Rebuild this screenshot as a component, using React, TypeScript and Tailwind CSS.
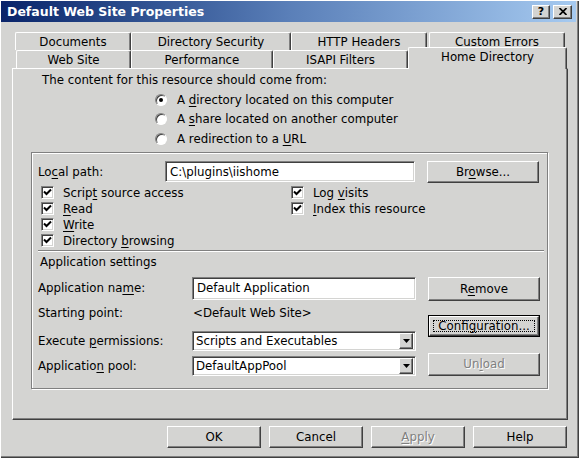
import { ReactNode } from "react";

const RAISED =
  "bg-[#d4d4d2] border border-t-white border-l-white border-r-[#404040] border-b-[#404040] shadow-[inset_-1px_-1px_0_#808080]";
const SUNKEN =
  "bg-white border border-t-[#808080] border-l-[#808080] border-r-white border-b-white shadow-[inset_1px_1px_0_#404040,inset_-1px_-1px_0_#d4d4d2]";

// Mnemonic underline
function U({ children }: { children: ReactNode }) {
  return <span className="underline underline-offset-[2px]">{children}</span>;
}

function Button({
  children,
  className = "",
  disabled,
  isDefault,
}: {
  children: ReactNode;
  className?: string;
  disabled?: boolean;
  isDefault?: boolean;
}) {
  const label = disabled ? (
    <span className="text-[#808080] [text-shadow:1px_1px_0_#fff]">{children}</span>
  ) : (
    <span>{children}</span>
  );
  if (isDefault) {
    return (
      <div className={`border border-black ${className}`}>
        <div className={`h-full w-full flex items-center justify-center p-[3px] ${RAISED}`}>
          <div className="h-full w-full flex items-center justify-center border border-dotted border-black">
            {label}
          </div>
        </div>
      </div>
    );
  }
  return (
    <div className={`flex items-center justify-center ${RAISED} ${className}`}>{label}</div>
  );
}

function Checkbox({ children }: { children: ReactNode }) {
  return (
    <div className="flex items-center h-[16px]">
      <div className={`w-[13px] h-[13px] flex items-center justify-center ${SUNKEN}`}>
        <svg width="9" height="9" viewBox="0 0 9 9">
          <path d="M1 3.5 L3.5 6 L8 1.5" stroke="#000" strokeWidth="2" fill="none" />
        </svg>
      </div>
      <span className="ml-[9px]">{children}</span>
    </div>
  );
}

function Radio({ children, checked }: { children: ReactNode; checked?: boolean }) {
  return (
    <div className="flex items-center h-[19.5px]">
      <div className="w-[12px] h-[12px] rounded-full bg-white flex items-center justify-center border border-t-[#808080] border-l-[#808080] border-r-white border-b-white shadow-[inset_1px_1px_0_#404040]">
        {checked && <div className="w-[4px] h-[4px] rounded-full bg-black" />}
      </div>
      <span className="ml-[10px]">{children}</span>
    </div>
  );
}

function Select({ value }: { value: string }) {
  return (
    <div className={`w-[224px] h-[20px] flex items-center pl-[3px] pr-[2px] ${SUNKEN}`}>
      <span className="flex-1">{value}</span>
      <div className={`w-[14px] h-[16px] flex items-center justify-center ${RAISED}`}>
        <svg width="7" height="4" viewBox="0 0 7 4">
          <polygon points="0,0 7,0 3.5,4" fill="#000" />
        </svg>
      </div>
    </div>
  );
}

function Tab({ label, className = "" }: { label: string; className?: string }) {
  return (
    <div
      className={`h-[18px] flex items-center justify-center bg-[#d4d4d2] border-t border-l border-r border-t-white border-l-white border-r-[#404040] rounded-t-[2px] shadow-[inset_-1px_0_0_#808080] ${className}`}
    >
      {label}
    </div>
  );
}

export default function App() {
  return (
    <div className="w-[579px] h-[458px] overflow-hidden flex flex-col bg-[#d4d4d2] text-black text-[11.8px] leading-[14px] font-['DejaVu_Sans',sans-serif] shadow-[inset_1px_1px_0_#fff,inset_-1px_-1px_0_#404040,inset_-2px_-2px_0_#808080]">
      {/* Title bar */}
      <div className="mx-[1px] mt-[1px] mr-[3px] h-[21px] flex items-center pl-[6px] pr-[4px] bg-linear-to-r from-[#0a246a] via-[#5a7fb8] to-[#a6caf0]">
        <span className="flex-1 text-white font-bold text-[12.5px]">Default Web Site Properties</span>
        <div className={`w-[18px] h-[14px] flex items-center justify-center font-bold text-[11px] ${RAISED}`}>
          ?
        </div>
        <div className={`ml-[3px] w-[19px] h-[14px] flex items-center justify-center ${RAISED}`}>
          <svg width="8" height="7" viewBox="0 0 8 7">
            <path d="M0.5 0 L7.5 7 M7.5 0 L0.5 7" stroke="#000" strokeWidth="1.7" />
          </svg>
        </div>
      </div>

      {/* Tabs, back row */}
      <div className="mt-[10px] ml-[15px] flex">
        <Tab label="Documents" className="w-[116px]" />
        <Tab label="Directory Security" className="w-[160px]" />
        <Tab label="HTTP Headers" className="w-[136px]" />
        <Tab label="Custom Errors" className="ml-[2px] w-[136px]" />
      </div>
      {/* Tabs, front row */}
      <div className="ml-[16px] h-[18px] flex items-end">
        <Tab label="Web Site" className="w-[115px]" />
        <Tab label="Performance" className="w-[142px]" />
        <Tab label="ISAPI Filters" className="w-[135px]" />
        <div className="relative z-10 -mb-[1px] w-[159px] h-[22px] pb-[4px] flex items-center justify-center bg-[#d4d4d2] border-t border-l border-r border-t-white border-l-white border-r-[#404040] rounded-t-[2px] shadow-[inset_-1px_0_0_#808080]">
          Home Directory
        </div>
      </div>

      {/* Panel */}
      <div className={`ml-[12px] w-[556px] h-[352px] flex flex-col ${RAISED}`}>
        <div className="mt-[4px] ml-[29px]">The content for this resource should come from:</div>
        <div className="mt-[3px] ml-[142px] flex flex-col">
          <Radio checked>
            A <U>d</U>irectory located on this computer
          </Radio>
          <Radio>
            A <U>s</U>hare located on another computer
          </Radio>
          <Radio>
            A redirection to a <U>U</U>RL
          </Radio>
        </div>

        {/* Group box */}
        <div className="mt-[3px] ml-[18px] w-[517px] h-[237px] flex flex-col border border-[#808080] shadow-[inset_1px_1px_0_#fff,1px_1px_0_#fff]">
          <div className="mt-[8px] ml-[6px] flex items-center">
            <span className="w-[127px]">
              Lo<U>c</U>al path:
            </span>
            <div className={`w-[250px] h-[21px] flex items-center pl-[4px] ${SUNKEN}`}>C:\plugins\iishome</div>
            <Button className="ml-[12px] w-[112px] h-[22px]">
              Br<U>o</U>wse...
            </Button>
          </div>

          <div className="mt-[2px] ml-[9px] flex">
            <div className="w-[250px] flex flex-col">
              <Checkbox>
                Scrip<U>t</U> source access
              </Checkbox>
              <Checkbox>
                <U>R</U>ead
              </Checkbox>
              <Checkbox>
                <U>W</U>rite
              </Checkbox>
              <Checkbox>
                Directory <U>b</U>rowsing
              </Checkbox>
            </div>
            <div className="flex flex-col">
              <Checkbox>
                Log <U>v</U>isits
              </Checkbox>
              <Checkbox>
                <U>I</U>ndex this resource
              </Checkbox>
            </div>
          </div>

          <div className="mt-[1px] ml-[6px] w-[506px] h-[2px] border-t border-t-[#808080] border-b border-b-white" />
          <div className="mt-[3px] ml-[8px]">Application settings</div>

          <div className="mt-[8px] ml-[6px] flex">
            <div className="w-[154px] flex flex-col">
              <div className="h-[23px] flex items-center">
                <span>
                  Application na<U>m</U>e:
                </span>
              </div>
              <div className="mt-[4px] h-[19px] flex items-center">
                <span>Starting point:</span>
              </div>
              <div className="mt-[8px] h-[20px] flex items-center">
                <span>
                  Execute <U>p</U>ermissions:
                </span>
              </div>
              <div className="mt-[5px] h-[20px] flex items-center">
                <span>
                  Applicatio<U>n</U> pool:
                </span>
              </div>
            </div>
            <div className="w-[224px] flex flex-col">
              <div className={`h-[23px] flex items-center pl-[4px] ${SUNKEN}`}>Default Application</div>
              <div className="mt-[4px] h-[19px] flex items-center pl-[1px]">&lt;Default Web Site&gt;</div>
              <div className="mt-[8px]">
                <Select value="Scripts and Executables" />
              </div>
              <div className="mt-[5px]">
                <Select value="DefaultAppPool" />
              </div>
            </div>
            <div className="ml-[12px] flex flex-col">
              <Button className="w-[112px] h-[24px]">
                R<U>e</U>move
              </Button>
              <Button isDefault className="mt-[14px] w-[112px] h-[22px]">
                Confi<U>g</U>uration...
              </Button>
              <Button disabled className="mt-[16px] w-[112px] h-[23px]">
                Un<U>l</U>oad
              </Button>
            </div>
          </div>
        </div>
      </div>

      {/* Dialog buttons */}
      <div className="mt-[6px] mr-[12px] flex justify-end gap-[8px]">
        <Button className="w-[94px] h-[22px]">OK</Button>
        <Button className="w-[94px] h-[22px]">Cancel</Button>
        <Button disabled className="w-[94px] h-[22px]">
          <U>A</U>pply
        </Button>
        <Button className="w-[94px] h-[22px]">Help</Button>
      </div>
    </div>
  );
}
